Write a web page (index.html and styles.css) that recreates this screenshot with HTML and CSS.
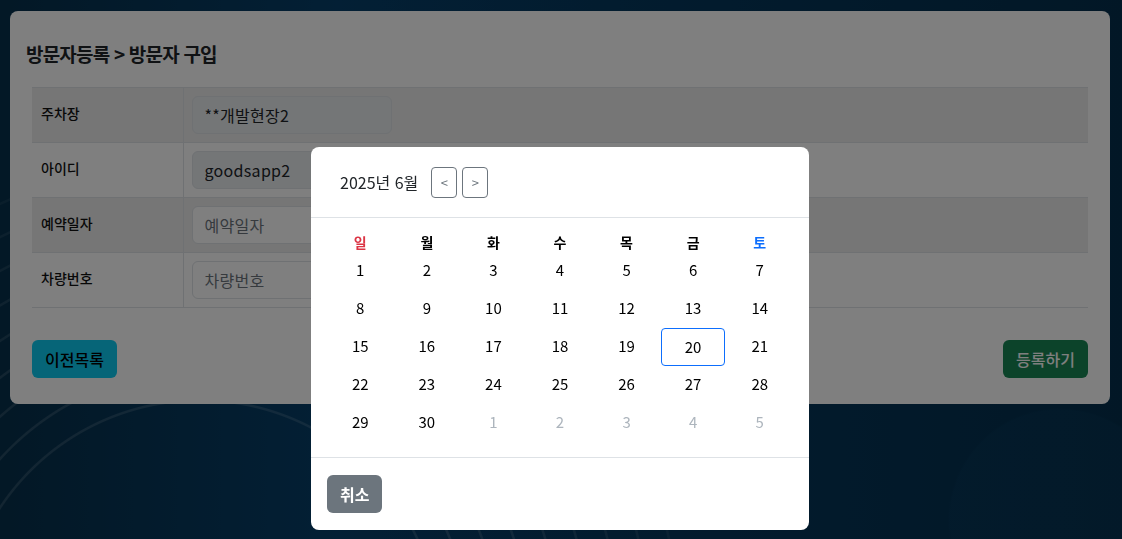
FILE: index.html
```html
<!DOCTYPE html>
<html lang="ko">
<head>
<meta charset="utf-8">
<title>방문자 구입</title>
<link rel="stylesheet" href="styles.css">
</head>
<body>
<div class="page">
  <section class="card">
    <h2 class="title">방문자등록 &gt; 방문자 구입</h2>
    <table class="form-table">
      <tr class="striped">
        <th>주차장</th>
        <td><input class="input" type="text" value="**개발현장2" disabled></td>
      </tr>
      <tr>
        <th>아이디</th>
        <td><input class="input" type="text" value="goodsapp2" disabled></td>
      </tr>
      <tr class="striped">
        <th>예약일자</th>
        <td><input class="input" type="text" placeholder="예약일자"></td>
      </tr>
      <tr>
        <th>차량번호</th>
        <td><input class="input" type="text" placeholder="차량번호"></td>
      </tr>
    </table>
    <div class="actions">
      <button class="btn btn-info">이전목록</button>
      <button class="btn btn-success">등록하기</button>
    </div>
  </section>
</div>

<div class="backdrop"></div>

<div class="modal">
  <div class="modal-header">
    <span class="month">2025년 6월</span>
    <button class="nav-btn">&lt;</button>
    <button class="nav-btn">&gt;</button>
  </div>
  <div class="modal-body">
    <div class="cal">
      <div class="wd sun">일</div><div class="wd">월</div><div class="wd">화</div><div class="wd">수</div><div class="wd">목</div><div class="wd">금</div><div class="wd sat">토</div>
      <div class="d">1</div><div class="d">2</div><div class="d">3</div><div class="d">4</div><div class="d">5</div><div class="d">6</div><div class="d">7</div>
      <div class="d">8</div><div class="d">9</div><div class="d">10</div><div class="d">11</div><div class="d">12</div><div class="d">13</div><div class="d">14</div>
      <div class="d">15</div><div class="d">16</div><div class="d">17</div><div class="d">18</div><div class="d">19</div><div class="d selected">20</div><div class="d">21</div>
      <div class="d">22</div><div class="d">23</div><div class="d">24</div><div class="d">25</div><div class="d">26</div><div class="d">27</div><div class="d">28</div>
      <div class="d">29</div><div class="d">30</div><div class="d other">1</div><div class="d other">2</div><div class="d other">3</div><div class="d other">4</div><div class="d other">5</div>
    </div>
  </div>
  <div class="modal-footer">
    <button class="btn btn-secondary">취소</button>
  </div>
</div>
</body>
</html>
```
FILE: styles.css
```css
* { box-sizing: border-box; }

html, body {
  margin: 0;
  height: 100%;
}

body {
  font-family: "Noto Sans CJK KR", "Noto Sans", sans-serif;
  color: #212529;
  background-color: #05345a;
  background-image:
    radial-gradient(circle at 200px 640px,
      transparent 0 238px,
      rgba(255,255,255,0.13) 239px 240.5px, transparent 241.5px 268px,
      rgba(255,255,255,0.13) 269px 270.5px, transparent 271.5px 298px,
      rgba(255,255,255,0.12) 299px 300.5px, transparent 301.5px 328px,
      rgba(255,255,255,0.12) 329px 330.5px, transparent 331.5px 358px,
      rgba(255,255,255,0.11) 359px 360.5px, transparent 361.5px 388px,
      rgba(255,255,255,0.10) 389px 390.5px, transparent 391.5px 418px,
      rgba(255,255,255,0.09) 419px 420.5px, transparent 421.5px 448px,
      rgba(255,255,255,0.08) 449px 450.5px, transparent 451.5px 478px,
      rgba(255,255,255,0.06) 479px 480.5px, transparent 481.5px),
    radial-gradient(circle at 1060px 520px, rgba(20,80,120,0.12) 0 110px, transparent 112px),
    linear-gradient(90deg, #06304c 0%, #063f6a 30%, #05385e 55%, #042f4d 100%);
  overflow: hidden;
}

.page {
  padding: 11px 12px 0 10px;
}

.card {
  background: #fff;
  border-radius: 8px;
  padding: 29px 22px 26px;
}

.title {
  margin: 0 0 19px -6px;
  font-size: 19px;
  line-height: 28px;
  font-weight: 700;
  letter-spacing: -0.8px;
  color: #212529;
}

.form-table {
  width: 100%;
  border-collapse: collapse;
  border-top: 1px solid #dee2e6;
}

.form-table tr {
  border-bottom: 1px solid #dee2e6;
}

.form-table tr.striped {
  background: #ececec;
}

.form-table th {
  width: 151px;
  padding: 6px 9px 11px;
  text-align: left;
  font-size: 14px;
  font-weight: 500;
  color: #111;
  border-right: 1px solid #dee2e6;
  vertical-align: middle;
}

.form-table td {
  padding: 8px 8px;
}

.input {
  display: block;
  width: 200px;
  height: 38px;
  padding: 0 12px;
  font-family: inherit;
  font-size: 16px;
  letter-spacing: 0.3px;
  color: #212529;
  background: #fff;
  border: 1px solid #dee2e6;
  border-radius: 6px;
  outline: none;
}

.input:disabled {
  background: #e9ecef;
  color: #212529;
  opacity: 1;
}

.input::placeholder {
  color: #6c757d;
}

.actions {
  display: flex;
  justify-content: space-between;
  margin-top: 32px;
}

.btn {
  height: 38px;
  padding: 0 12px;
  border: 1px solid transparent;
  border-radius: 6px;
  font-family: inherit;
  font-size: 16px;
  font-weight: 500;
  cursor: pointer;
}

.btn-info {
  background: #0dcaf0;
  color: #000;
}

.btn-success {
  background: #198754;
  color: #fff;
}

.btn-secondary {
  background: #6c757d;
  color: #fff;
  font-weight: 700;
}

.backdrop {
  position: fixed;
  inset: 0;
  background: rgba(0, 0, 0, 0.5);
}

.modal {
  position: fixed;
  left: 311px;
  top: 147px;
  width: 498px;
  background: #fff;
  border-radius: 8px;
  overflow: hidden;
}

.modal-header {
  height: 71px;
  display: flex;
  align-items: center;
  padding: 0 16px 0 29px;
  border-bottom: 1px solid #dee2e6;
}

.month {
  font-size: 16px;
  margin-right: 13px;
  color: #212529;
}

.nav-btn {
  width: 26px;
  height: 31px;
  margin-right: 5px;
  padding: 0;
  background: #fff;
  border: 1px solid #6c757d;
  border-radius: 4px;
  color: #6c757d;
  font-family: inherit;
  font-size: 13px;
}

.modal-body {
  padding: 15px 16px 16px;
}

.cal {
  display: grid;
  grid-template-columns: repeat(7, 1fr);
  grid-auto-rows: 38px;
  grid-template-rows: 18px;
}

.wd {
  display: flex;
  align-items: center;
  justify-content: center;
  font-size: 14px;
  font-weight: 700;
  color: #000;
}

.wd.sun { color: #dc3545; }
.wd.sat { color: #0d6efd; }

.d {
  display: flex;
  align-items: center;
  justify-content: center;
  padding-bottom: 1px;
  font-size: 15px;
  color: #000;
  border: 1px solid transparent;
  border-radius: 4px;
}

.d.other { color: #adb5bd; }

.d.selected {
  border-color: #0d6efd;
  margin: 1px 1px -1px;
}

.modal-footer {
  border-top: 1px solid #dee2e6;
  padding: 17px 16px;
}
```
